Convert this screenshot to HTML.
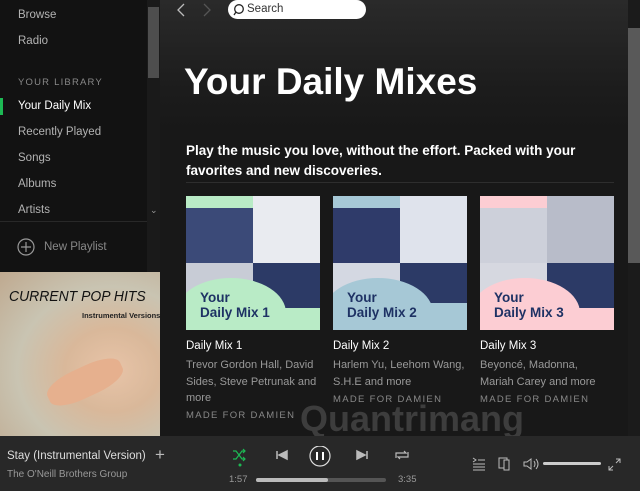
<!DOCTYPE html>
<html><head><meta charset="utf-8"><style>
*{margin:0;padding:0;box-sizing:border-box}
body{width:640px;height:491px;overflow:hidden;background:#181818;font-family:"Liberation Sans",sans-serif;position:relative}
.abs{position:absolute}
.side{left:0;top:0;width:147px;height:272px;background:#121212}
.side div{position:absolute;left:18px;font-size:11.5px;color:#b3b3b3}
.sb{left:147px;top:0;width:13px;height:272px;background:#1a1a1a}
.main{left:160px;top:0;width:468px;height:436px;background:linear-gradient(#2a2a2a 0,#1c1c1c 90px,#181818 130px)}
.card{position:absolute;top:196px;width:134px;height:134px;overflow:hidden}
.ct{position:absolute;left:14px;top:94px;color:#1e3264;font-weight:bold;font-size:13.5px;line-height:15px}
.t1{position:absolute;top:340px;color:#fff;font-size:11.5px}
.t2{position:absolute;color:#999;font-size:11px;line-height:16.5px;width:136px}
.mf{position:absolute;color:#888;font-size:9.5px;letter-spacing:1.3px}
.bar{left:0;top:436px;width:640px;height:55px;background:#282828}
</style></head><body>
<div class="abs side">
<div style="top:9px">Browse</div>
<div style="top:35px">Radio</div>
<div style="top:77px;font-size:9.5px;letter-spacing:1.2px;color:#888">YOUR LIBRARY</div>
<div style="top:100px;color:#fff">Your Daily Mix</div>
<div style="top:126px">Recently Played</div>
<div style="top:152px">Songs</div>
<div style="top:178px">Albums</div>
<div style="top:204px">Artists</div>
<span class="abs" style="left:0;top:98px;width:3px;height:17px;background:#1db954"></span>
<span class="abs" style="left:0;top:221px;width:147px;height:1px;background:#282828"></span>
<svg class="abs" style="left:17px;top:238px" width="18" height="18"><circle cx="9" cy="9" r="8" fill="none" stroke="#999" stroke-width="1.2"/><path d="M9 4v10M4 9h10" stroke="#999" stroke-width="1.2"/></svg>
<div style="top:241px;left:44px;color:#888">New Playlist</div>
</div>
<div class="abs sb"><div class="abs" style="left:1px;top:7px;width:11px;height:71px;background:#4e4e4e"></div><span class="abs" style="left:3px;top:205px;color:#999;font-size:9px">⌄</span></div>
<div class="abs" style="left:0;top:272px;width:160px;height:164px;background:radial-gradient(ellipse at 70% 60%,#e8c4a8,#d9b89a 30%,#c9c4b2 60%,#bfa98f)">
<div class="abs" style="left:9px;top:16px;font-size:15px;color:#111;font-style:italic;white-space:nowrap;transform:scaleX(0.93);transform-origin:left">CURRENT POP HITS</div>
<div class="abs" style="left:82px;top:39px;font-size:7.5px;color:#222;font-weight:bold;white-space:nowrap">Instrumental Versions</div>
<div class="abs" style="left:45px;top:95px;width:80px;height:30px;background:#e6b08e;border-radius:40%;transform:rotate(-25deg)"></div>
</div>
<div class="abs main">
<svg class="abs" style="left:14px;top:3px" width="40" height="14"><path d="M10 1L4 7l6 6" fill="none" stroke="#bbb" stroke-width="1.3"/><path d="M30 1l6 6-6 6" fill="none" stroke="#555" stroke-width="1.3"/></svg>
<div class="abs" style="left:68px;top:0;width:138px;height:19px;background:#fff;border-radius:10px"><svg class="abs" style="left:5px;top:3px" width="13" height="13"><circle cx="6" cy="6" r="4.3" fill="none" stroke="#222" stroke-width="1.3"/><path d="M3 9l-2 3" stroke="#222" stroke-width="1.3"/></svg><span class="abs" style="left:19px;top:3px;font-size:11.5px;color:#333">Search</span></div>
<div class="abs" style="left:24px;top:61px;font-size:37px;font-weight:bold;color:#fff">Your Daily Mixes</div>
<div class="abs" style="left:26px;top:141px;font-size:13.5px;font-weight:bold;color:#fff;line-height:19.5px;width:420px">Play the music you love, without the effort. Packed with your favorites and new discoveries.</div>
<div class="abs" style="left:26px;top:182px;width:428px;height:1px;background:#2e2e2e"></div>
</div>
<div class="abs" style="left:628px;top:0;width:12px;height:436px;background:#1b1b1b"><div class="abs" style="left:0;top:28px;width:12px;height:235px;background:#595959"></div></div>

<div class="card" style="left:186px;background:#b9ebc6">
<div class="abs" style="left:0;top:12px;width:67px;height:55px;background:#3b4a78"></div>
<div class="abs" style="left:67px;top:0;width:67px;height:67px;background:#e9ebf0"></div>
<div class="abs" style="left:0;top:67px;width:67px;height:30px;background:#c8ccd6"></div>
<div class="abs" style="left:67px;top:67px;width:67px;height:45px;background:#2c3a66"></div>
<div class="abs" style="left:-10px;top:82px;width:110px;height:70px;background:#b9ebc6;border-radius:50%"></div>
<div class="abs" style="left:60px;top:112px;width:80px;height:30px;background:#b9ebc6"></div>
<div class="ct">Your<br>Daily Mix 1</div></div>
<div class="card" style="left:333px;background:#a6c8d6">
<div class="abs" style="left:0;top:12px;width:67px;height:55px;background:#2f3b6a"></div>
<div class="abs" style="left:67px;top:0;width:67px;height:67px;background:#dfe3ec"></div>
<div class="abs" style="left:0;top:67px;width:67px;height:30px;background:#d4d8e2"></div>
<div class="abs" style="left:67px;top:67px;width:67px;height:40px;background:#2c3a66"></div>
<div class="abs" style="left:-10px;top:82px;width:110px;height:70px;background:#a6c8d6;border-radius:50%"></div>
<div class="abs" style="left:60px;top:107px;width:80px;height:30px;background:#a6c8d6"></div>
<div class="ct">Your<br>Daily Mix 2</div></div>
<div class="card" style="left:480px;background:#fccdd3">
<div class="abs" style="left:0;top:12px;width:67px;height:55px;background:#cdd0da"></div>
<div class="abs" style="left:67px;top:0;width:67px;height:67px;background:#b8bcc9"></div>
<div class="abs" style="left:0;top:67px;width:67px;height:30px;background:#d6d8e0"></div>
<div class="abs" style="left:67px;top:67px;width:67px;height:45px;background:#2c3a66"></div>
<div class="abs" style="left:-10px;top:82px;width:110px;height:70px;background:#fccdd3;border-radius:50%"></div>
<div class="abs" style="left:60px;top:112px;width:80px;height:30px;background:#fccdd3"></div>
<div class="ct">Your<br>Daily Mix 3</div></div>

<div class="t1" style="left:186px">Daily Mix 1</div>
<div class="t1" style="left:333px">Daily Mix 2</div>
<div class="t1" style="left:480px">Daily Mix 3</div>
<div class="t2" style="left:186px;top:357px">Trevor Gordon Hall, David Sides, Steve Petrunak and more</div>
<div class="t2" style="left:333px;top:357px">Harlem Yu, Leehom Wang, S.H.E and more</div>
<div class="t2" style="left:480px;top:357px;width:122px">Beyoncé, Madonna, Mariah Carey and more</div>
<div class="mf" style="left:186px;top:410px">MADE FOR DAMIEN</div>
<div class="mf" style="left:333px;top:394px">MADE FOR DAMIEN</div>
<div class="mf" style="left:480px;top:394px">MADE FOR DAMIEN</div>
<div class="abs" style="left:300px;top:398px;font-size:36px;font-weight:bold;color:rgba(170,170,170,0.25)">Quantrimang</div>

<div class="abs bar">
<div class="abs" style="left:7px;top:14px;color:#ddd;font-size:11.5px">Stay (Instrumental Version)</div>
<div class="abs" style="left:155px;top:9px;color:#bbb;font-size:17px">+</div>
<div class="abs" style="left:7px;top:33px;color:#999;font-size:10px">The O'Neill Brothers Group</div>
<svg class="abs" style="left:230px;top:10px" width="200" height="30">
<path d="M3 5h3l6 8h3M3 13h3l6-8h3M13 3l2 2-2 2M13 11l2 2-2 2" fill="none" stroke="#1db954" stroke-width="1.2"/><circle cx="10" cy="19" r="1.5" fill="#1db954"/>
<path d="M47 5v8M57 5l-8 4 8 4z" fill="#bbb" stroke="#bbb" stroke-width="1.5"/>
<circle cx="90" cy="10" r="10" fill="none" stroke="#ddd" stroke-width="1.2"/><path d="M87 6v8M93 6v8" stroke="#fff" stroke-width="2"/>
<path d="M137 5v8M127 5l8 4-8 4z" fill="#bbb" stroke="#bbb" stroke-width="1.5"/>
<path d="M166 12V7h10l-2-2M178 6v5h-10l2 2" fill="none" stroke="#bbb" stroke-width="1.2"/>
</svg>
<div class="abs" style="left:229px;top:38px;color:#999;font-size:9.5px">1:57</div>
<div class="abs" style="left:256px;top:42px;width:130px;height:4px;background:#555;border-radius:2px"><div style="width:72px;height:4px;background:#bbb;border-radius:2px"></div></div>
<div class="abs" style="left:398px;top:38px;color:#999;font-size:9.5px">3:35</div>
<svg class="abs" style="left:470px;top:20px" width="160" height="16">
<path d="M3 2l3 2-3 2M3 8h12M3 11h12M3 14h12M8 4h7" fill="none" stroke="#bbb" stroke-width="1"/>
<rect x="29" y="2" width="8" height="10" fill="none" stroke="#bbb"/><rect x="34" y="4" width="5" height="10" fill="#282828" stroke="#bbb"/>
<path d="M54 6h3l4-3v10l-4-3h-3zM64 5q2 3 0 6M66 3q4 5 0 10" fill="none" stroke="#bbb"/>
<rect x="73" y="6" width="58" height="3" rx="1.5" fill="#ccc"/>
<path d="M139 14l4-4M150 3l-4 4M139 10v4h4M150 7V3h-4" fill="none" stroke="#bbb"/>
</svg>
</div>
</body></html>
